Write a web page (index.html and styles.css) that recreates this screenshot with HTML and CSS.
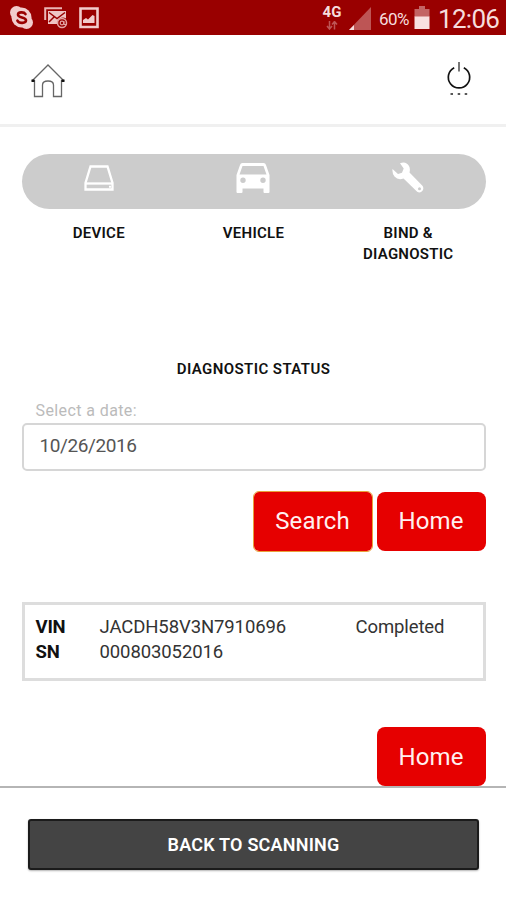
FILE: index.html
```html
<!DOCTYPE html>
<html lang="en">
<head>
<meta charset="utf-8">
<title>Diagnostic Status</title>
<link rel="stylesheet" href="styles.css">
</head>
<body>
<div class="statusbar">
  <div class="notifications">
    <svg width="26" height="25" viewBox="0 0 26 25"><g fill="#f2cccc"><circle cx="12.5" cy="12.5" r="10"/><circle cx="7.500" cy="7.500" r="6.500"/><circle cx="17.500" cy="17.500" r="6.500"/></g><path d="M16.500 9.200C15 6.600 9 6.800 9 9.700c0 3.400 8 2.100 8 5.600 0 3.300-7 3.500-8.600.4" fill="none" stroke="#990000" stroke-width="2.600" stroke-linecap="round"/></svg>
    <svg width="24" height="22" viewBox="0 0 24 22"><path d="M1.200 13V1.200H18" fill="none" stroke="#eab5b5" stroke-width="2"/><path d="M4 4h18v7.500a5.500 5.500 0 0 0-8.500 5.500H4z" fill="#efc4c4"/><path d="m5 5.500 8 6 8-6M5 15l5-5" fill="none" stroke="#990000" stroke-width="1.500"/><circle cx="18" cy="16" r="4.500" fill="none" stroke="#e4a4a4" stroke-width="1.500"/><circle cx="18" cy="16" r="1.800" fill="none" stroke="#e4a4a4" stroke-width="1.200"/><path d="M20 14v3.500h2" fill="none" stroke="#e4a4a4"/></svg>
    <svg width="20" height="22" viewBox="0 0 20 22"><path d="M1.500 1.500h17v18.500h-17z" fill="none" stroke="#f2cccc" stroke-width="2.600"/><path d="M4 16v-3l3-2 2 1.500 4.500-4.500 2 1v7z" fill="#f2cccc"/></svg>
  </div>
  <div class="system">
    <div class="network"><span>4G</span><svg width="12" height="9" viewBox="0 0 12 9"><path d="M3.500 0v7M1 5l2.500 3L6 5M8.500 8.500V1M6 3.500l2.500-3 2.500 3" fill="none" stroke="#bd5555" stroke-width="1.500"/></svg></div>
    <svg class="signal" width="24" height="24" viewBox="0 0 24 24"><path d="M23 0v23H1z" fill="#bd5555"/><path d="M6 18v5H1z" fill="#f6dddd"/></svg>
    <span class="percent">60%</span>
    <svg class="battery" width="16" height="23" viewBox="0 0 16 23"><path d="M5 0h6v3h4.500v8H.5V3H5z" fill="#c36464"/><path d="M.5 10.500h15V23H.5z" fill="#f8e0e0"/></svg>
    <span class="clock">12:06</span>
  </div>
</div>
<header class="header">
  <svg width="36" height="36" viewBox="0 0 36 36" fill="none"><path d="m2 18 16-16 16 16M4.500 17v16.500h8V22c0-3 2-4 5.500-4s5.500 1 5.500 4v11.500h8V17" stroke="#666" stroke-width="1.300"/><path d="M1.500 17.800h3M31.500 17.800h3" stroke="#111" stroke-width="2.400"/></svg>
  <svg width="26" height="36" viewBox="0 0 26 36" fill="none"><path d="M8.200 6.700a10.700 10.700 0 1 0 9.600 0" stroke="#111" stroke-width="1.700"/><path d="M13 1v9.500" stroke="#777" stroke-width="2"/><path d="M4.500 33h2.500M11.700 33h2.500M18.700 33h2.500" stroke="#222" stroke-width="1.600"/></svg>
</header>
<main class="content">
  <div class="steps">
    <svg width="32" height="27" viewBox="0 0 32 27" fill="none" stroke="#fff" stroke-width="2.300"><path d="M7.500 1.500h17l5 16.500v6.500h-27V18z"/><path d="M2 18.500h28"/><path d="M26 21.800h2" stroke-width="2"/></svg>
    <svg width="36" height="32" viewBox="0 0 36 32"><path fill="#fff" fill-rule="evenodd" d="M7.500 1h21q2 0 2.500 2l3.500 10v17q0 1-1 1h-4q-1 0-1-1v-3.500h-21V30q0 1-1 1h-4q-1 0-1-1V13L5 3q.5-2 2.500-2zM7.500 4l-3 8.500h27l-3-8.500zM8 15.500a2.700 2.700 0 1 0 0 5.400 2.700 2.700 0 0 0 0-5.400zm20 0a2.700 2.700 0 1 0 0 5.400 2.700 2.700 0 0 0 0-5.400z"/></svg>
    <svg width="34" height="34" viewBox="0 0 34 34"><path fill="#fff" fill-rule="evenodd" d="M9 2.200Q15-.2 18 5q1.500 3 .5 6.500L31.200 24.600q2 2.200.5 4.900-2.500 3.300-5.500 1.300L12.500 17.500Q7 19.500 3.500 15.500 1 12.500 1.500 8l5.500 5 4-1.200L12.700 7.500zM28.500 26.300a1.500 1.500 0 1 0 0 3 1.500 1.500 0 0 0 0-3z"/></svg>
  </div>
  <div class="step-labels"><span>DEVICE</span><span>VEHICLE</span><span>BIND &amp;<br>DIAGNOSTIC</span></div>
  <h1 class="title">DIAGNOSTIC STATUS</h1>
  <label class="date-label">Select a date:</label>
  <div class="date-field">10/26/2016</div>
  <div class="actions"><button class="btn search">Search</button><button class="btn">Home</button></div>
  <section class="result">
    <b>VIN</b><span class="vin">JACDH58V3N7910696</span><span class="state">Completed</span>
    <b>SN</b><span class="sn">000803052016</span>
  </section>
  <div class="actions last"><button class="btn">Home</button></div>
</main>
<footer class="footer"><button class="back">BACK TO SCANNING</button></footer>
</body>
</html>
```
FILE: styles.css
```css
* { box-sizing: border-box; }
body { margin: 0; width: 506px; height: 900px; overflow: hidden; background: #fff; font-family: Roboto, "Liberation Sans", sans-serif; color: #111; display: flex; flex-direction: column; }
svg { display: block; flex: none; }
button { font-family: inherit; padding: 0; }

.statusbar { height: 35px; flex: none; background: #990000; display: flex; justify-content: space-between; padding: 0 7px 0 9px; color: #f6dddd; }
.notifications { display: flex; align-items: center; gap: 11px; }
.notifications svg:first-child { margin-right: -2px; }
.system { display: flex; align-items: flex-start; }
.network { width: 20px; font-size: 15px; line-height: 14px; font-weight: 700; display: flex; flex-direction: column; align-items: center; padding-top: 5px; gap: 2px; margin-right: 6px; }
.signal { margin-top: 7px; margin-right: 7px; }
.percent { font-size: 17px; line-height: 20px; margin-top: 9px; width: 32px; letter-spacing: -.5px; margin-right: 3px; }
.battery { margin-top: 6px; margin-right: 8px; }
.clock { font-size: 26px; line-height: 30px; margin-top: 4px; width: 61px; letter-spacing: -.7px; }

.header { height: 92px; flex: none; border-bottom: 3px solid #f0f0f0; display: flex; justify-content: space-between; padding: 28px 34px 0 30px; }
.header svg:last-child { margin-top: -2px; }

.content { height: 659px; flex: none; padding: 26.500px 20.500px 0 21.500px; }
.steps { height: 55px; border-radius: 28px; background: #ccc; display: grid; grid-template-columns: repeat(3, 1fr); justify-items: center; align-items: center; padding-bottom: 6px; }
.step-labels { display: grid; grid-template-columns: repeat(3, 1fr); text-align: center; font-size: 15px; line-height: 21px; font-weight: 600; padding-top: 14px; height: 56px; letter-spacing: .25px; }
.title { margin: 94px 0 0; text-align: center; font-size: 15px; line-height: 20px; font-weight: 600; letter-spacing: .42px; }
.date-label { display: block; margin: 22px 0 0 14px; font-size: 16px; line-height: 20px; letter-spacing: .4px; color: #bbb; }
.date-field { height: 48px; margin-top: 2px; border: 2px solid #d6d6d6; border-radius: 5px; padding: 9px 16px; font-size: 19px; line-height: 24px; letter-spacing: -.4px; color: #555; }
.actions { display: flex; justify-content: flex-end; gap: 5px; margin-top: 21px; }
.btn { width: 109px; height: 59px; border: 0; border-radius: 8px; background: #e60000; color: #fff0f0; font-size: 24px; letter-spacing: .15px; }
.search { width: 118px; outline: 1px solid #e9a03b; outline-offset: 0; }
.search:first-child { border-radius: 5px; }
.result { height: 79px; margin-top: 51px; border: 3px solid #ddd; display: grid; grid-template-columns: 64px 256px 1fr; grid-auto-rows: 25px; padding: 10px 11px; font-size: 18.500px; line-height: 25px; letter-spacing: -.1px; color: #333; }
.result b { color: #111; letter-spacing: -.2px; }
.last { margin-top: 46.500px; }

.footer { flex: 1; border-top: 2px solid #b5b5b5; padding: 31px 27px 0 28px; }
.back { display: block; width: 100%; height: 51px; border: 2px solid #1b1b1b; border-radius: 3px; background: #444; color: #fff; font-size: 18px; font-weight: 600; letter-spacing: .2px; box-shadow: 0 1px 2px rgba(0,0,0,.3); }
```
